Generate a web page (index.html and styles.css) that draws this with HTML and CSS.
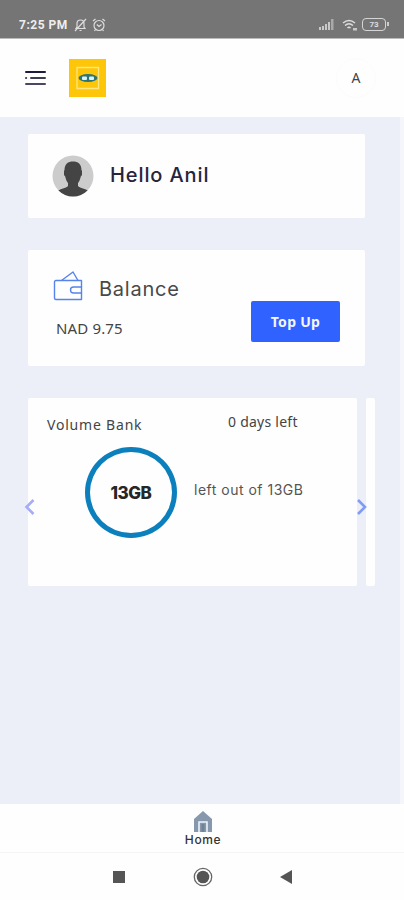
FILE: index.html
```
<!DOCTYPE html>
<html lang="en">
<head>
<meta charset="utf-8">
<title>Home</title>
<link rel="stylesheet" href="styles.css">
</head>
<body>
<div class="phone">
  <div class="status">
    <span class="time">7:25 PM</span>
    <svg class="mute" width="13" height="14" viewBox="0 0 13 14" fill="none" stroke="#ddd" stroke-width="1.2"><path d="M2 10.500h9L10 9V5.500A3.500 3.500 0 0 0 3 5.500V9zM5.500 12.500h2M12 1 1 13"/></svg>
    <svg class="alarm" width="14" height="14" viewBox="0 0 14 14" fill="none" stroke="#ddd" stroke-width="1.200"><circle cx="7" cy="7.500" r="5"/><path d="M1 3 3.500 1M13 3l-2.500-2M4.800 6.500 7 8.500l2.500-2M3.500 11.500 2.500 13M10.500 11.500l1 1.500"/></svg>
    <span class="fill"></span>
    <svg class="signal" width="15" height="11" viewBox="0 0 15 11" fill="#c8c8c8"><path d="M0 8h2v3H0zM3 7h2v4H3zM6 5h2v6H6zM9 3h2v8H9z"/><path d="M12 0h2.500v11H12z" fill="#aaa"/></svg>
    <svg class="wifi" width="15" height="12" viewBox="0 0 15 12" fill="none" stroke="#ddd" stroke-width="1.600"><path d="M1 4q6-5 12 0M3 6.500q4-3.500 8 0M5.500 9q1.500-1.500 3 0M12 9v2.500M14 9v2.500"/></svg>
    <div class="battery"><span>73</span></div>
  </div>
  <header class="header">
    <svg class="menu" width="22" height="16" viewBox="0 0 22 16" stroke-width="2" stroke-linecap="round"><path d="M2 2h19" stroke="#1c1b3c"/><path d="M2 8h.2M7 8h14" stroke="#3c3c50"/><path d="M2 14h19" stroke="#494765"/></svg>
    <svg class="logo" width="37" height="38" viewBox="0 0 37 38"><path fill="#fdc609" d="M0 0h37v38H0z"/><path d="M8 8.500h21.500v21h-21.500z" fill="none" stroke="#ffe680" stroke-width="1.300"/><ellipse cx="19" cy="19" rx="9.500" ry="4" fill="#2f7474"/><rect x="13" y="17.500" width="5" height="3.500" rx="1" fill="#d9f3fa"/><rect x="20" y="17.500" width="5" height="3.500" rx="1" fill="#d9f3fa"/></svg>
    <div class="initial">A</div>
  </header>
  <main class="main">
    <section class="card hello">
      <svg class="avatar" width="42" height="42" viewBox="0 0 42 42"><defs><clipPath id="c"><circle cx="21" cy="21" r="20.500"/></clipPath></defs><circle cx="21" cy="21" r="20.500" fill="#ccc"/><path clip-path="url(#c)" fill="#444" d="M12.500 15C12.500 9 16 6.500 21 6.500S29.500 9 29.500 15l.5 1v4l-1.200 1.500C28 25 27 27 26 28v3c2 2.500 8 2.500 10 5v6H6v-6c2-2.500 8-2.500 10-5v-3c-1-1-2-3-2.800-6.500L12 20v-4z"/></svg>
      <h1>Hello Anil</h1>
    </section>
    <section class="card balance">
      <div class="balance-title">
        <svg width="30" height="31" viewBox="0 0 30 31" fill="none" stroke="#5683ec" stroke-width="1.400" stroke-linejoin="round"><path d="M28.500 17V10.500H3Q1.500 10.500 1.500 12V28Q1.500 29.500 3 29.500H28.500V23"/><path d="M8.500 10.500 20 2l5 8.500M28.500 17H20.500a3 3 0 0 0 0 6h8z"/></svg>
        <h2>Balance</h2>
      </div>
      <div class="amount">NAD 9.75</div>
      <button class="topup">Top Up</button>
    </section>
    <div class="carousel">
      <section class="card volume">
        <div class="volume-head"><span class="bank">Volume Bank</span><span class="days">0 days left</span></div>
        <div class="volume-body"><div class="ring"><span>13GB</span></div><span class="left">left out of 13GB</span></div>
      </section>
      <div class="card next"></div>
      <svg class="arrow prev-arrow" width="12" height="18" viewBox="0 0 12 18" fill="none" stroke="#a5adf5" stroke-width="2.600"><path d="M9.500 2 2.500 9l7 7"/></svg>
      <svg class="arrow next-arrow" width="12" height="18" viewBox="0 0 12 18" fill="none" stroke="#819cf6" stroke-width="2.600"><path d="m2 2 7 7-7 7"/></svg>
    </div>
  </main>
  <footer class="tab">
    <svg width="20" height="21" viewBox="0 0 20 21"><path fill="#8798ae" d="M10 0 19 8v13H1V8z"/><path fill="none" stroke="#edf4fb" stroke-width="1.600" d="M6 21v-10h8v10"/><path fill="#718397" d="M8.500 13h3v8h-3z"/></svg>
    <span>Home</span>
  </footer>
  <nav class="system">
    <svg width="12" height="12" viewBox="0 0 12 12"><path fill="#555" d="M0 0h12v12H0z"/></svg>
    <svg width="20" height="20" viewBox="0 0 20 20"><circle cx="10" cy="10" r="8.700" fill="none" stroke="#666" stroke-width="1.300"/><circle cx="10" cy="10" r="6.300" fill="#555"/></svg>
    <svg width="12" height="14" viewBox="0 0 12 14"><path fill="#555" d="M12 0v14L0 7z"/></svg>
  </nav>
</div>
</body>
</html>
```
FILE: styles.css
```
* { box-sizing: border-box; }
body { margin: 0; font-family: "Noto Sans", sans-serif; color: #444; }
h1, h2 { margin: 0; font-family: Inter, sans-serif; }
svg { display: block; flex: none; }
span, h1, h2, .amount { white-space: nowrap; }
.phone { width: 404px; height: 900px; display: flex; flex-direction: column; overflow: hidden; background: #fefefe; }
.status { height: 39px; flex: none; display: flex; align-items: center; padding: 11px 17px 0 19px; background: #757575; border-bottom: 1px solid #bbb; }
.time { font: 700 12px/14px Roboto, sans-serif; color: #eee; width: 49px; letter-spacing: 0.5px; }
.mute { margin-left: 6px; }
.alarm { margin-left: 5px; }
.fill { flex: 1; }
.wifi { margin: 0 5px 0 8px; }
.battery { position: relative; width: 24px; height: 13px; border: 1.5px solid #d5d5d5; border-radius: 4px; display: flex; align-items: center; justify-content: center; font: 700 8px/8px Roboto, sans-serif; color: #ddd; margin-right: 1px; }
.battery::after { content: ""; position: absolute; right: -4px; top: 3px; width: 2px; height: 4px; background: #ccc; }
.header { height: 78px; flex: none; display: flex; align-items: center; padding: 0 28px 0 24px; }
.logo { margin-left: 23px; }
.initial { margin-left: auto; width: 40px; height: 40px; border: 1px solid #fcfcfc; border-radius: 50%; text-align: center; font-size: 14px; line-height: 38px; }
.main { flex: 1; background: #eceff8; border-right: 4px solid #f4f6fc; padding: 17px 0 0 28px; }
.card { background: #fefefe; border-radius: 2px; }
.hello { width: 337px; height: 84px; display: flex; align-items: center; padding-left: 24px; }
.hello h1 { margin-left: 16px; font-size: 20px; font-weight: 500; letter-spacing: 0.9px; line-height: 24px; color: #24243f; padding-bottom: 2px; }
.balance { width: 337px; height: 116px; margin-top: 32px; display: grid; grid-template-columns: 1fr 89px; grid-template-rows: 31px 42px; padding: 20px 25px 0; }
.balance-title { display: flex; grid-column: 1 / 3; }
.balance-title h2 { margin: 7px 0 0 16px; font-size: 20px; font-weight: 400; letter-spacing: 0.75px; line-height: 24px; color: #494949; }
.amount { padding: 16px 0 0 3px; font-size: 15px; line-height: 22px; letter-spacing: 0.15px; }
.topup { border: 0; border-radius: 2px; background: #2f62ff; color: #f4f7ff; font: 700 14px/20px "Noto Sans", sans-serif; letter-spacing: 0.3px; padding: 0; height: 41px; }
.carousel { position: relative; display: flex; gap: 9px; margin-top: 32px; height: 188px; }
.volume { width: 329px; }
.next { width: 9px; }
.volume-head { display: flex; padding: 14px 0 0 19px; height: 49px; font-size: 14px; line-height: 20px; }
.bank { padding-top: 3px; width: 181px; letter-spacing: 0.8px; }
.days { letter-spacing: 0.25px; }
.volume-body { display: flex; padding-left: 57px; }
.ring { width: 92px; height: 91px; border: 5px solid #0b80bd; border-radius: 50%; display: flex; align-items: center; justify-content: center; font: 800 17px/20px Inter, sans-serif; letter-spacing: -0.5px; color: #262626; }
.left { margin: 33px 0 0 17px; font: 400 14px/20px Inter, sans-serif; letter-spacing: 0.5px; color: #555; }
.arrow { position: absolute; top: 100px; }
.prev-arrow { left: -4px; }
.next-arrow { left: 328px; }
.tab { height: 49px; flex: none; display: flex; flex-direction: column; align-items: center; padding: 7px 0 0 2px; border-bottom: 1px solid #f5f5f5; font: 500 12px/16px Inter, sans-serif; color: #333; letter-spacing: 0.6px; }
.system { height: 47px; flex: none; display: flex; justify-content: space-between; align-items: center; padding: 0 112px 0 113px; }
```
